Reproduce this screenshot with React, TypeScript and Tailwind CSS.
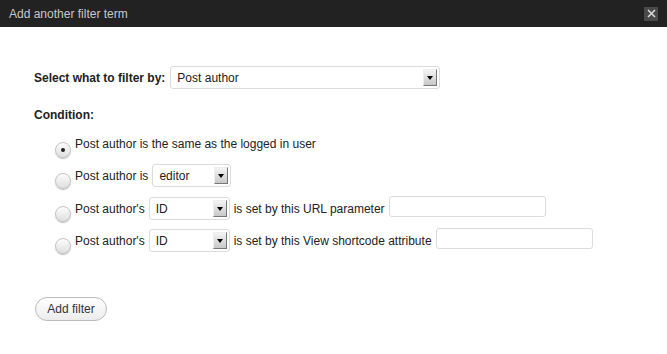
import React from 'react';

const font = { fontFamily: '"Liberation Sans", Arial, sans-serif' };

function Arrow() {
  return (
    <span className="flex h-[17px] w-[14px] items-center justify-center border border-t-[#eee] border-l-[#eee] border-r-[#777] border-b-[#777] bg-gradient-to-b from-[#f4f4f4] to-[#c8c8c8]">
      <svg width="6" height="4" viewBox="0 0 6 4">
        <path d="M0 0h6L3 4z" fill="#000" />
      </svg>
    </span>
  );
}

function Select({ value, width }: { value: string; width: string }) {
  return (
    <div className={`flex h-[23px] items-center justify-between rounded-[3px] border border-[#dcdcdc] bg-white pl-[6px] pr-[2px] ${width}`}>
      <span className="text-[12px] text-[#222]">{value}</span>
      <Arrow />
    </div>
  );
}

function Radio({ checked }: { checked?: boolean }) {
  return (
    <span className="mt-[9px] flex h-[16px] w-[16px] shrink-0 items-center justify-center rounded-full border border-[#c4c4c4] bg-gradient-to-b from-[#fdfdfd] to-[#dedede] shadow-[0_1px_1px_rgba(0,0,0,0.25)]">
      {checked && <span className="h-[4px] w-[4px] rounded-full bg-[#222]" />}
    </span>
  );
}

export default function App() {
  return (
    <div className="h-[354px] w-[667px] bg-white text-[12px] text-[#222]" style={font}>
      <div className="flex h-[27px] items-center justify-between bg-[#222] pl-[9px] pr-[9px]">
        <span className="text-[12px] text-[#c8c8c8]">Add another filter term</span>
        <span className="flex h-[14px] w-[14px] items-center justify-center bg-[#4a4a4a]">
          <svg width="9" height="9" viewBox="0 0 9 9">
            <path d="M1 1l7 7M8 1l-7 7" stroke="#ddd" strokeWidth="1.5" />
          </svg>
        </span>
      </div>

      <div className="pl-[34px] pt-[39px]">
        <div className="flex items-center gap-[5px]">
          <span className="font-bold">Select what to filter by:</span>
          <Select value="Post author" width="w-[270px]" />
        </div>

        <div className="mt-[17px] font-bold">Condition:</div>

        <div className="mt-[9px] flex flex-col pl-[21px]">
          <label className="flex h-[22px] items-start gap-[4px]">
            <Radio checked />
            <span className="mt-[2px]">Post author is the same as the logged in user</span>
          </label>
          <div className="mt-[9px] flex h-[23px] items-start gap-[4px]">
            <Radio />
            <div className="flex items-center gap-[4px]">
              <span>Post author is</span>
              <Select value="editor" width="w-[79px]" />
            </div>
          </div>
          <div className="mt-[10px] flex h-[23px] items-start gap-[4px]">
            <Radio />
            <div className="flex items-center gap-[4px]">
              <span>Post author's</span>
              <Select value="ID" width="w-[81px]" />
              <span>is set by this URL parameter</span>
              <input className="-mt-[4px] h-[21px] w-[157px] rounded-[3px] border border-[#dcdcdc] outline-none" />
            </div>
          </div>
          <div className="mt-[9px] flex h-[23px] items-start gap-[4px]">
            <Radio />
            <div className="flex items-center gap-[4px]">
              <span>Post author's</span>
              <Select value="ID" width="w-[81px]" />
              <span>is set by this View shortcode attribute</span>
              <input className="-mt-[4px] h-[21px] w-[157px] rounded-[3px] border border-[#dcdcdc] outline-none" />
            </div>
          </div>
        </div>

        <button
          className="ml-[1px] mt-[45px] h-[24px] w-[72px] rounded-full border border-[#bbb] bg-gradient-to-b from-white to-[#ececec] text-[12px] text-[#333]"
          style={font}
        >
          Add filter
        </button>
      </div>
    </div>
  );
}
